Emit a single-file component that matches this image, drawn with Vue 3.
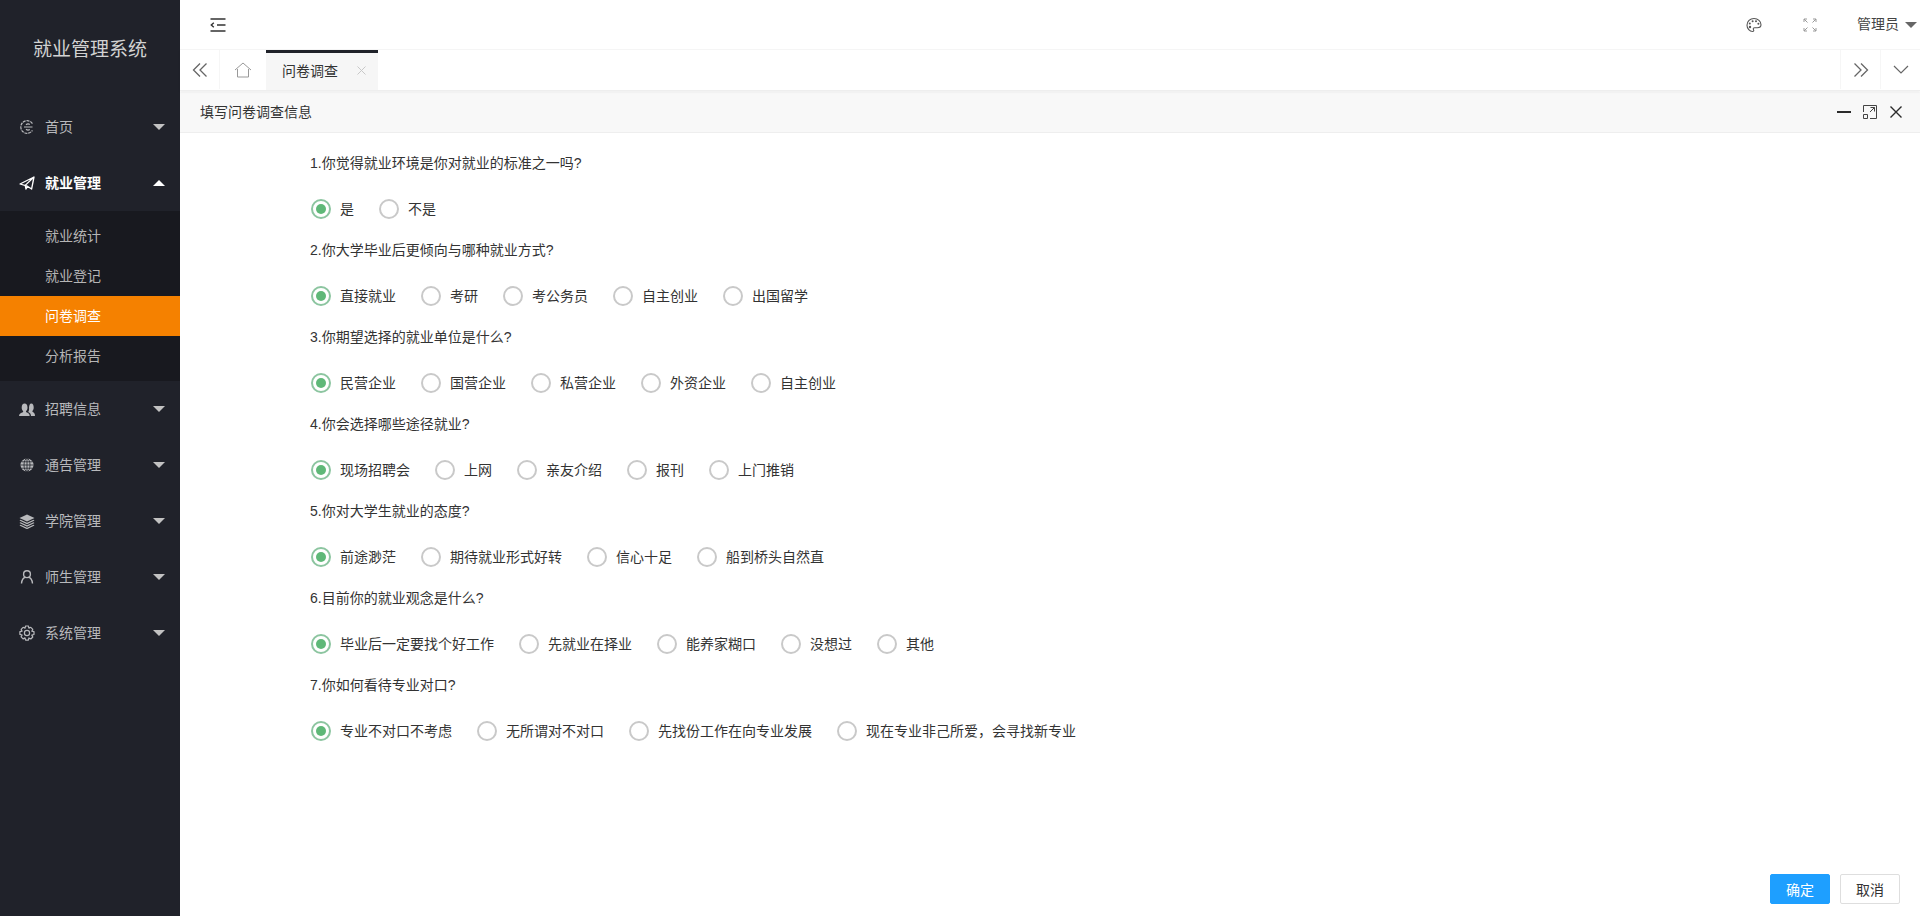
<script setup>
const menus = [
  { name: '首页', icon: 'home' },
  { name: '就业管理', icon: 'plane', open: true, subs: ['就业统计', '就业登记', '问卷调查', '分析报告'] },
  { name: '招聘信息', icon: 'users' },
  { name: '通告管理', icon: 'globe' },
  { name: '学院管理', icon: 'layers' },
  { name: '师生管理', icon: 'user' },
  { name: '系统管理', icon: 'gear' }
]
const questions = [
  { t: '1.你觉得就业环境是你对就业的标准之一吗?', o: ['是', '不是'] },
  { t: '2.你大学毕业后更倾向与哪种就业方式?', o: ['直接就业', '考研', '考公务员', '自主创业', '出国留学'] },
  { t: '3.你期望选择的就业单位是什么?', o: ['民营企业', '国营企业', '私营企业', '外资企业', '自主创业'] },
  { t: '4.你会选择哪些途径就业?', o: ['现场招聘会', '上网', '亲友介绍', '报刊', '上门推销'] },
  { t: '5.你对大学生就业的态度?', o: ['前途渺茫', '期待就业形式好转', '信心十足', '船到桥头自然直'] },
  { t: '6.目前你的就业观念是什么?', o: ['毕业后一定要找个好工作', '先就业在择业', '能养家糊口', '没想过', '其他'] },
  { t: '7.你如何看待专业对口?', o: ['专业不对口不考虑', '无所谓对不对口', '先找份工作在向专业发展', '现在专业非己所爱\uFF0C会寻找新专业'] }
]
</script>

<template>
  <div class="app">
    <aside class="side">
      <div class="logo">就业管理系统</div>
      <nav class="nav">
        <template v-for="m in menus" :key="m.name">
          <div class="item" :class="{ open: m.open }">
            <svg class="mi" viewBox="0 0 16 16" width="16" height="16">
              <g v-if="m.icon === 'home'" fill="none" stroke="currentColor" stroke-width="1.2">
                <path d="M13.4 4.6A6.3 6.3 0 1 0 13.4 11.4" stroke-dasharray="3 .8" />
                <path d="M5 8h8.500M7 5.800A3 3 0 0 1 10.800 5.400M7 10.200A3 3 0 0 0 10.800 10.600" />
              </g>
              <g v-else-if="m.icon === 'plane'" fill="none" stroke="currentColor" stroke-width="1.300" stroke-linejoin="round">
                <path d="M1 9 15 2 12.600 14 8.400 11.200 1 9ZM15 2 6.200 10.400 7 14 8.600 11.300" />
              </g>
              <g v-else-if="m.icon === 'users'" fill="currentColor">
                <path d="M0 15c0-2.300 2.200-3 3.800-3.700.5-.3.5-1 .1-1.500C3 9 2.700 7.800 2.700 6.500 2.700 4 3.800 2.500 5.600 2.500S8.500 4 8.500 6.500c0 1.300-.3 2.500-1.200 3.300-.4.500-.4 1.200.1 1.500 1.600.7 3.300 1.400 3.300 3.700H0Z" />
                <path d="M12 15c0-2-1-3.300-2.800-4.100.8-1 1.100-2.800.8-4.200.2-2.500.7-4.200 2.300-4.200 1.700 0 2.400 1.700 2.400 4 0 1.300-.3 2.400-1.100 3.200-.3.500-.3 1 .2 1.300 1.100.6 2.200 1.400 2.200 4H12Z" />
              </g>
              <g v-else-if="m.icon === 'globe'">
                <circle cx="8" cy="8" r="6.500" fill="currentColor" />
                <g fill="none" stroke="#20222a" stroke-width=".8">
                  <ellipse cx="8" cy="8" rx="3" ry="6.500" />
                  <path d="M8 1.500v13M1.500 8h13M2.500 4.800h11M2.500 11.200h11" />
                </g>
              </g>
              <g v-else-if="m.icon === 'layers'" fill="currentColor">
                <path d="M8 1.500 15.500 5 8 8.500.5 5 8 1.500Z" />
                <path d="M1.500 6.800 8 9.800l6.500-3 1 .8L8 11.200.5 7.600l1-.8Z" />
                <path d="M1.500 9.300 8 12.300l6.500-3 1 .8L8 13.700.5 10.100l1-.8Z" />
                <path d="M1.500 11.800 8 14.800l6.500-3 1 .8L8 16.200.5 12.600l1-.8Z" />
              </g>
              <g v-else-if="m.icon === 'user'" fill="none" stroke="currentColor" stroke-width="1.400">
                <circle cx="8" cy="5.200" r="3.400" />
                <path d="M2.500 14.500c.3-3.400 2.300-5.800 4-6.200M13.500 14.500c-.3-3.400-2.300-5.800-4-6.200" />
              </g>
              <g v-else fill="none" stroke="currentColor" stroke-width="1.200" stroke-linejoin="round">
                <path d="M6.600 1h2.800l.5 2.200 1.900-.9 2 2-1 1.900 2.200.5v2.800l-2.200.6 1 1.900-2 2-1.900-1-.5 2.200H6.600L6 12.900l-1.900 1-2-2 1-1.900L.9 9.400V6.700L3.100 6.200l-1-1.900 2-2 1.900.9.600-2.200Z" />
                <circle cx="8" cy="8" r="2.600" />
              </g>
            </svg>
            <span class="mt">{{ m.name }}</span>
            <i class="caret" :class="{ up: m.open }"></i>
          </div>
          <div v-if="m.subs" class="subs">
            <div v-for="s in m.subs" :key="s" class="sub" :class="{ active: s === '问卷调查' }">{{ s }}</div>
          </div>
        </template>
      </nav>
    </aside>

    <main class="main">
      <header class="top">
        <svg class="fold" viewBox="0 0 16 14" width="16" height="14" fill="none" stroke="#333" stroke-width="1.400">
          <path d="M.5 1h15M7 7h8.500M.5 13h15" />
          <path d="M3.800 4.800 1.300 7l2.500 2.200" />
        </svg>
        <div class="top-right">
          <svg class="palette" viewBox="0 0 16 16" width="16" height="16" fill="none" stroke="#555" stroke-width="1.100">
            <path d="M8 1.500C4 1.500 1 4.500 1 8.200c0 3.500 2.800 6.300 5.500 6.300 1.400 0 1.500-1 1-1.800-.6-1 0-2 1.200-2h2.500c2 0 3.800-1 3.800-3 0-3.500-3-6.200-7-6.200Z" />
            <g fill="#555" stroke="none">
              <circle cx="4" cy="10" r="1.200" /><circle cx="3.800" cy="6.500" r="1" />
              <circle cx="6.600" cy="4.200" r="1" /><circle cx="10" cy="4.300" r="1" /><circle cx="12.400" cy="6.700" r="1" />
            </g>
          </svg>
          <svg class="full" viewBox="0 0 14 14" width="14" height="14" fill="none" stroke="#999" stroke-width="1">
            <path d="M1 4V1h3M1 1l3.500 3.500M10 1h3v3M13 1 9.500 4.500M1 10v3h3M1 13l3.500-3.500M13 10v3h-3M13 13 9.500 9.500" />
          </svg>
          <span class="admin">管理员</span>
          <i class="admin-caret"></i>
        </div>
      </header>

      <div class="tabs">
        <div class="tb left">
          <svg viewBox="0 0 16 14" width="16" height="14" fill="none" stroke="#666" stroke-width="1.300">
            <path d="M8 .5 1.500 7 8 13.500M14.500 .5 8 7l6.500 6.500" />
          </svg>
        </div>
        <div class="tb homeb">
          <svg viewBox="0 0 18 16" width="18" height="16" fill="none" stroke="#999" stroke-width="1">
            <path d="M1 8 9 1l8 7M3.500 7v8h11V7" />
          </svg>
        </div>
        <div class="tab">
          <span>问卷调查</span>
          <svg class="x" viewBox="0 0 9 9" width="9" height="9" fill="none" stroke="#c8c8c8" stroke-width="1"><path d="m.5.5 8 8m0-8-8 8" /></svg>
        </div>
        <div class="grow"></div>
        <div class="tb right">
          <svg viewBox="0 0 16 14" width="16" height="14" fill="none" stroke="#666" stroke-width="1.300">
            <path d="M1.500 .5 8 7l-6.500 6.500M8 .5 14.500 7 8 13.500" />
          </svg>
        </div>
        <div class="tb right last">
          <svg viewBox="0 0 16 9" width="16" height="9" fill="none" stroke="#666" stroke-width="1.200">
            <path d="M1 1l7 7 7-7" />
          </svg>
        </div>
      </div>

      <section class="panel">
        <div class="ph">
          <span class="pt">填写问卷调查信息</span>
          <div class="ctrl">
            <svg viewBox="0 0 14 14" width="14" height="14"><path d="M0 7h14" stroke="#2b2b2b" stroke-width="2" /></svg>
            <svg viewBox="0 0 14 14" width="14" height="14" fill="none" stroke="#444" stroke-width="1">
              <path d="M.5 7V.5h13v13H7M.5 9.500h4v4h-4zM7 7l4.500-4.500M7.500 2.500h4v4" />
            </svg>
            <svg viewBox="0 0 14 14" width="14" height="14" fill="none" stroke="#2b2b2b" stroke-width="1.400"><path d="m1.500 1.500 11 11m0-11-11 11" /></svg>
          </div>
        </div>
        <div class="form">
          <div v-for="q in questions" :key="q.t" class="q">
            <div class="qt">{{ q.t }}</div>
            <div class="opts">
              <label v-for="(o, i) in q.o" :key="o" class="opt">
                <i class="radio" :class="{ on: i === 0 }"></i>
                <span>{{ o }}</span>
              </label>
            </div>
          </div>
        </div>
        <div class="foot">
          <button class="btn ok">确定</button>
          <button class="btn">取消</button>
        </div>
      </section>
    </main>
  </div>
</template>

<style>
html, body { margin: 0; padding: 0; overflow: hidden; }
</style>

<style scoped>
.app {
  display: flex;
  width: 1920px;
  height: 916px;
  font-family: "Liberation Sans", "Noto Sans CJK SC", sans-serif;
  font-size: 14px;
  color: #333;
  background: #fff;
  overflow: hidden;
}
.side { width: 180px; flex: none; background: #20222a; color: #b8b9bc; }
.logo { height: 99px; padding-top: 38px; box-sizing: border-box; text-align: center; font-size: 19px; line-height: 24px; color: #d2d2d2; }
.item { height: 56px; display: flex; align-items: center; padding: 0 15px 0 19px; position: relative; }
.item.open { color: #fff; }
.item.open .mt { font-weight: 700; }
.mi { flex: none; width: 16px; height: 16px; margin-right: 10px; }
.mt { flex: 1; line-height: 20px; }
.caret { width: 0; height: 0; border: 6px solid transparent; border-top-color: #c2c2c2; border-bottom: 0; }
.caret.up { border-top: 0; border-bottom: 6px solid #fff; }
.subs { background: #18191f; padding: 5px 0 5px; }
.sub { height: 40px; line-height: 40px; padding-left: 45px; color: #b5b5b5; }
.sub.active { background: #f58100; color: #fff; }

.main { flex: 1; min-width: 0; display: flex; flex-direction: column; }
.top { height: 50px; flex: none; display: flex; align-items: center; justify-content: space-between; padding: 0 3px 0 30px; box-sizing: border-box; border-bottom: 1px solid #f6f6f6; }
.fold { display: block; margin-top: 1px; }
.top-right { display: flex; align-items: center; color: #444; }
.palette { margin-right: 41px; }
.full { margin-right: 40px; }
.admin { line-height: 20px; color: #444; margin-top: -2px; }
.admin-caret { width: 0; height: 0; border: 6px solid transparent; border-top-color: #666; border-bottom: 0; margin: 0 0 0 6px; }

.tabs { height: 41px; flex: none; display: flex; box-sizing: border-box; border-bottom: 1px solid #eee; box-shadow: 0 1px 2px rgba(0,0,0,.08); position: relative; }
.tb { display: flex; align-items: center; justify-content: center; height: 39px; box-sizing: border-box; }
.left { width: 40px; border-right: 1px solid #f6f6f6; }
.homeb { width: 46px; }
.right { width: 40px; border-left: 1px solid #f6f6f6; }
.grow { flex: 1; }
.tab { width: 112px; height: 40px; box-sizing: border-box; border-top: 3px solid #1f2229; background: #f6f6f6; display: flex; align-items: center; padding: 0 0 3px 16px; color: #333; }
.x { margin-left: 19px; flex: none; }

.panel { flex: 1; min-height: 0; display: flex; flex-direction: column; margin-top: 1px; }
.ph { height: 41px; flex: none; box-sizing: border-box; display: flex; align-items: center; justify-content: space-between; padding: 0 17px 0 20px; background: #f8f8f8; border-bottom: 1px solid #eee; font-size: 14px; color: #333; }
.pt { margin-top: -2px; }
.ctrl { display: flex; gap: 12px; }
.ctrl svg { display: block; }
.form { flex: 1; padding: 18px 0 0 130px; }
.q { height: 87px; }
.qt { height: 24px; line-height: 24px; color: #333; }
.opts { display: flex; margin-top: 18px; height: 26px; align-items: center; padding-top: 2px; box-sizing: content-box; gap: 24px; }
.opt { display: flex; align-items: center; }
.radio { width: 20px; height: 20px; box-sizing: border-box; border: 2px solid #c9c9c9; border-radius: 50%; margin: 2px 9px 0 1px; display: flex; align-items: center; justify-content: center; }
.radio.on { border-color: #8cc5a0; }
.radio.on::after { content: ""; width: 10px; height: 10px; border-radius: 50%; background: #5fb878; }
.foot { flex: none; display: flex; justify-content: flex-end; gap: 10px; padding: 0 20px 12px 0; }
.btn { height: 30px; padding: 0 15px; min-width: 60px; box-sizing: border-box; border: 1px solid #dedede; background: #fff; border-radius: 2px; font: inherit; color: #333; }
.btn.ok { background: #1e9fff; border-color: #1e9fff; color: #fff; }
</style>
